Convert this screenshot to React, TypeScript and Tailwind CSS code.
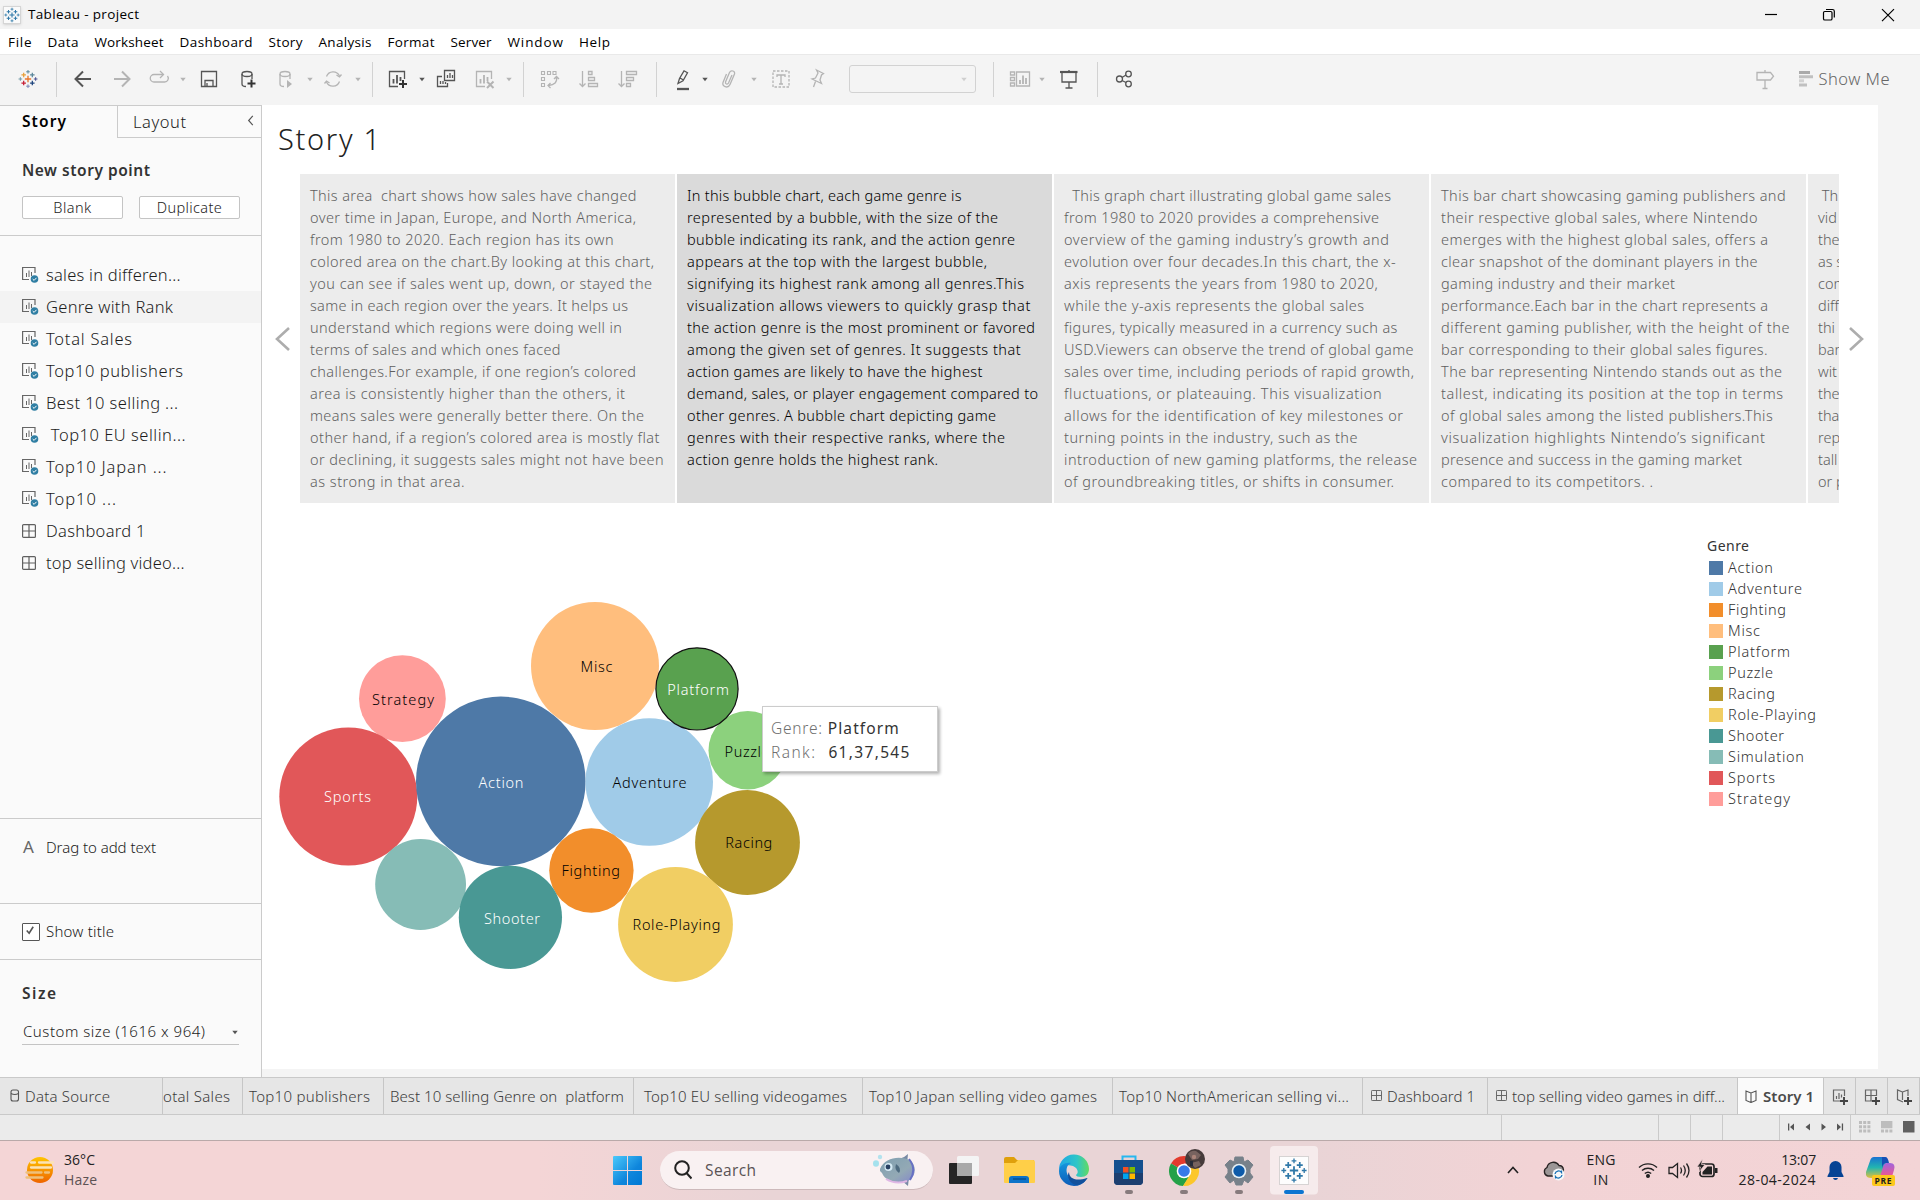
import React, { useLayoutEffect, useRef } from "react";

/** Single line of text tracked so that it fills exactly `w` pixels. */
function T({ w, children, className = "" }: { w?: number; children: string; className?: string }) {
  const ref = useRef<HTMLSpanElement>(null);
  useLayoutEffect(() => {
    const el = ref.current;
    if (!el || !w) return;
    el.style.letterSpacing = "0px";
    const natural = el.getBoundingClientRect().width;
    el.style.letterSpacing = `${(w - natural) / Math.max(1, children.length - 1)}px`;
  }, [w, children]);
  return (
    <span ref={ref} className={`inline-block shrink-0 whitespace-pre ${className}`}>
      {children}
    </span>
  );
}

type IconProps = { className?: string; children: React.ReactNode; c?: string };

function Ico({ className = "", children, c = "#b4b4b4" }: IconProps) {
  return (
    <svg viewBox="0 0 24 24" className={`h-6 w-6 shrink-0 ${className}`} fill="none" stroke={c} strokeWidth="1.3">
      {children}
    </svg>
  );
}

function Caret({ className = "", c = "#b4b4b4" }: { className?: string; c?: string }) {
  return (
    <svg viewBox="0 0 8 8" className={`h-2 w-2 shrink-0 ${className}`}>
      <path d="M1.300 2.800h5.400L4 6.200z" fill={c} />
    </svg>
  );
}

function Sep({ className = "" }: { className?: string }) {
  return <div className={`h-[35px] w-px shrink-0 bg-[#d2d2d2] ${className}`} />;
}

const menus: [string, number][] = [
  ["File", 23.5], ["Data", 31], ["Worksheet", 69], ["Dashboard", 73], ["Story", 34],
  ["Analysis", 53], ["Format", 47], ["Server", 41], ["Window", 55.5], ["Help", 31],
];

const D = "#555";

function TableauMark({ mono = false }: { mono?: boolean }) {
  const k = mono ? ["#2f78a8", "#2f78a8", "#2f78a8", "#2f78a8", "#2f78a8"] : ["#e8762c", "#c72037", "#1f457e", "#5b879b", "#59879b"];
  return (
    <g fill="none" strokeWidth="1.4">
      <path d="M10 6.500v7M6.500 10h7" stroke={k[0]} strokeWidth="1.500" />
      <path d="M5.200 3v5M2.700 5.500h5" stroke={mono ? k[0] : "#e8a03a"} />
      <path d="M14.800 3v5M12.300 5.500h5" stroke={k[3]} />
      <path d="M5.200 12v5M2.700 14.500h5" stroke={k[1]} />
      <path d="M14.800 12v5M12.300 14.500h5" stroke={k[2]} />
      <path d="M10 0v4M8 2h4" stroke={k[4]} strokeWidth="1.100" />
      <path d="M10 16v4M8 18h4" stroke={mono ? k[0] : "#7a84b5"} strokeWidth="1.100" />
      <path d="M1.500 8v4M-.500 10h4" stroke={mono ? k[0] : "#7199a6"} strokeWidth="1.100" />
      <path d="M18.500 8v4M16.500 10h4" stroke={mono ? k[0] : "#4a4f90"} strokeWidth="1.100" />
    </g>
  );
}

function TitleBar() {
  return (
    <div className="flex h-[29px] shrink-0 items-center bg-[#f3f3f3] pl-[3px] font-['Open_Sans','Noto_Sans',sans-serif] text-[13.5px] text-black">
      <svg viewBox="-1 -1 22 22" className="h-[18px] w-[18px] border border-[#d5d5d5] bg-[#fafafa] shadow-sm"><TableauMark mono /></svg>
      <T w={111} className="ml-[7px]">Tableau - project</T>
      <svg viewBox="0 0 140 16" className="mr-[25px] ml-auto h-4 w-[140px]" fill="none" stroke="#000" strokeWidth="1.2">
        <path d="M10 7.5h12" />
        <rect x="68.5" y="4.5" width="8.5" height="8.5" rx="1.3" />
        <path d="M71 2.5h6.5a1.8 1.8 0 0 1 1.8 1.8v6.2" />
        <path d="M127 2.2l12 12M139 2.2l-12 12" />
      </svg>
    </div>
  );
}

function Toolbar() {
  return (
    <div className="flex h-[51px] shrink-0 items-center border-t border-[#e9e9e9] bg-[#f4f4f4] pr-[30px] pb-[2px] pl-4">
      <svg viewBox="-2 -2 24 24" className="h-6 w-6 shrink-0 scale-90"><TableauMark /></svg>
      <Sep className="ml-4" />
      <Ico className="ml-[14px]" c={D}><path d="M20 12H5M12 4.500L4.500 12l7.500 7.500" strokeWidth="2" /></Ico>
      <Ico className="ml-[15px]"><path d="M4 12h15M12 4.500l7.500 7.500-7.500 7.500" strokeWidth="2" /></Ico>
      <Ico className="ml-[13px]"><path d="M16 7.500H7A3.700 3.700 0 0 0 7 15h10.500a3.700 3.700 0 0 0 3-6" /><path d="M13 4l3.500 3.500L13 11" /></Ico>
      <Caret className="ml-2" />
      <Ico className="ml-[10px]" c={D}><path d="M4.500 4.500h15v15h-15z" /><path d="M8 19v-5.500h8V19M10 19v-3" /></Ico>
      <Ico className="ml-[14px]" c={D}><path d="M7 7v10c0 1.500 1.500 2.500 4 2.500M17 7v5" /><ellipse cx="12" cy="7" rx="5" ry="2.500" /><path d="M16.500 12.500v8M12.500 16.500h8" stroke="#333" strokeWidth="2" /></Ico>
      <Ico className="ml-[14px]"><path d="M7 7v10c0 1.500 1.500 2.500 4 2.500M17 7v5" /><ellipse cx="12" cy="7" rx="5" ry="2.500" /><path d="M14 13l5 4-5 4z" fill="#b4b4b4" stroke="none" /></Ico>
      <Caret className="ml-[9px]" />
      <Ico className="ml-[7px]"><path d="M5.500 9.500A7 7 0 0 1 18.500 9M18.500 14.500A7 7 0 0 1 5.500 15" /><path d="M3.500 16.500l2-2.500 3 2M20.500 7.500l-2 2.500-3-2" /></Ico>
      <Caret className="ml-[9px]" />
      <Sep className="ml-[10px]" />
      <Ico className="ml-3" c={D}><path d="M19.500 12V4.500h-15v15H13" /><path d="M8.500 12v4.500M12 8v8.500M15.500 10v4" strokeWidth="1.800" /><path d="M18 13v8M14 17h8" stroke="#333" strokeWidth="2" /></Ico>
      <Caret className="ml-[9px]" c={D} />
      <Ico className="ml-2" c={D}><path d="M10.500 3.500h10v10h-10z" /><path d="M8 9.500H3.500v10h10V16" /><path d="M13.500 8v3M16 6v5M18.500 8v3M6.500 14v3M9 14v3M11.500 15v2" /></Ico>
      <Ico className="ml-[14px]"><path d="M19.500 12V4.500h-15v15H13" /><path d="M8.500 12v4.500M12 8v8.500M15.500 10v4" strokeWidth="1.800" /><path d="M15 14.500l6.500 6.500M21.500 14.500L15 21" strokeWidth="2" /></Ico>
      <Caret className="ml-[9px]" />
      <Sep className="ml-[10px]" />
      <Ico className="ml-[13px]"><path d="M4.500 4.500h3v3h-3zM10.500 4.500h3v3h-3zM16 4.500h3v3h-3zM4.500 10.500h3v3h-3zM4.500 16.500h3v3h-3z" strokeWidth="1.100" /><path d="M19.500 10c1 5-2 8-8 8.500M17 12l2.500-2.500L22 12M13.500 16l-2.500 2.500 2.500 2.500" /></Ico>
      <Ico className="ml-4"><path d="M5.500 4v15M2.500 16.500l3 3 3-3" /><path d="M11.500 4.500h3.500v3h-3.500zM11.500 10.500h6v3h-6zM11.500 16.500h9v3h-9z" /></Ico>
      <Ico className="ml-[15px]"><path d="M5.500 4v15M2.500 16.500l3 3 3-3" /><path d="M10.500 4.500h10v3h-10zM10.500 10.500h7v3h-7zM10.500 16.500h4v3h-4z" /></Ico>
      <Sep className="ml-4" />
      <Ico className="ml-[14px]" c={D}><path d="M7 16.500l1.500-5L13 3.800l3.500 2-4.500 8zM9 11l3.500 2" /><path d="M6 22h12" strokeWidth="2.300" /></Ico>
      <Caret className="ml-[6px]" c={D} />
      <Ico className="ml-2"><path d="M15 8l-3.500 8c-1 2-3.500 1-3-1l4-9.500c1.500-3 6-1.500 5 1.500l-4.500 10.500c-2 4.500-8.500 2-7-2L9.500 7" /></Ico>
      <Caret className="ml-[9px]" />
      <Ico className="ml-[11px]"><path d="M4 4h16v16H4z" strokeDasharray="2.500 1.500" /><path d="M8 10V8h8v2M12 8v9M10 17h4" /></Ico>
      <Ico className="ml-3"><path d="M11.500 3l7 3.500-2 1.500-1.500 5 1.500 3.500-9.500-4.500 3.500-1L13 6zM10.500 14.500L8.500 20" /></Ico>
      <div className="ml-5 flex h-7 w-[127px] items-center justify-end rounded-[3px] border border-[#d2d2d2] pr-[7px]"><Caret c="#cfcfcf" /></div>
      <Sep className="ml-[17px]" />
      <Ico className="ml-[14px]"><path d="M2.500 5h4v3h-4zM2.500 10.500h4v3h-4zM2.500 16h4v3h-4zM8.500 5h13v14h-13z" /><path d="M12 13v4M15 8.500V17M18 11v6" strokeWidth="1.800" /></Ico>
      <Caret className="ml-[6px]" />
      <Ico className="ml-[11px]" c={D}><path d="M3 5h17.500" strokeWidth="2.200" /><path d="M5 5.500v9.500h14V5.500M12 15v6M8.500 21h7M12 3v2" /></Ico>
      <Sep className="ml-4" />
      <Ico className="ml-[14px]" c={D}><circle cx="7.500" cy="12" r="3" /><circle cx="16.500" cy="7" r="2.800" /><circle cx="16.500" cy="17" r="2.800" /><path d="M10 10.500l4-2.500M10 13.500l4 2" /></Ico>
      <Ico className="ml-auto"><path d="M4 5.500h13.500l3 3.700-3 3.800H4zM12 3v2.500M12 13v8.500M9.500 21.500h5" /></Ico>
      <svg viewBox="0 0 14 16" className="ml-[22px] h-4 w-[14px] shrink-0">
        <path d="M0 0h11v3H0z" fill="#aaa" /><path d="M0 4.200h14v3H0zM0 12.500h8v3H0z" fill="#c0c0c0" /><path d="M0 8.300h5v3H0z" fill="#d2d2d2" />
      </svg>
      <T w={71} className="ml-[6px] text-[16.500px] font-light text-[#666]">Show Me</T>
    </div>
  );
}

function SheetIcon() {
  return (
    <svg viewBox="0 0 18 18" className="h-[18px] w-[18px] shrink-0" fill="none" stroke="#666">
      <path d="M13 7V1.500H.600v12H7" strokeWidth="1.200" />
      <path d="M4.500 7v4M7 4.500V11M9.500 6v4" />
      <circle cx="12.500" cy="13" r="3.800" fill="#2f7ea3" stroke="none" />
      <path d="M10.700 13l1.400 1.400 2.400-2.600" stroke="#fff" />
    </svg>
  );
}

function GridIcon({ className = "h-[14px] w-[14px]" }: { className?: string }) {
  return (
    <svg viewBox="0 0 14 14" className={`shrink-0 ${className}`} fill="none" stroke="#606060" strokeWidth="1.200">
      <rect x=".6" y=".6" width="12.800" height="12.800" rx="1" /><path d="M7 1v12M1 7h12" />
    </svg>
  );
}

const sheets: [string, number, boolean?][] = [
  ["sales in differen...", 134.5], ["Genre with Rank", 127], ["Total Sales", 86], ["Top10 publishers", 137],
  ["Best 10 selling ...", 132], [" Top10 EU sellin...", 139.5], ["Top10 Japan ...", 120.500], ["Top10 ...", 70],
  ["Dashboard 1", 99.5, true], ["top selling video...", 138.500, true],
];

function Sidebar() {
  return (
    <aside className="flex w-[262px] shrink-0 flex-col border-t border-r border-[#cbcbcb] bg-[#fafafa] text-[#1c1c1c]">
      <div className="flex h-8">
        <div className="flex w-[117px] items-center pl-[22px] text-black"><T w={44} className="text-[15.500px] font-semibold">Story</T></div>
        <div className="flex flex-1 items-center justify-between border-b border-l border-[#cbcbcb] pr-[7px] pl-[15px]">
          <T w={53} className="pt-px text-[16.500px] font-light">Layout</T>
          <svg viewBox="0 0 7 12" className="mb-[2px] h-[11px] w-[7px]" fill="none" stroke="#555" strokeWidth="1.300"><path d="M6 1L1.500 6 6 11" /></svg>
        </div>
      </div>
      <div className="flex h-[98px] flex-col border-b border-[#cbcbcb] pt-[20px] pl-[22px]">
        <T w={128} className="h-6 self-start text-[15.500px] leading-6 font-semibold text-[#333]">New story point</T>
        <div className="mt-[14px] flex gap-4 text-[14.500px] font-light">
          <div className="flex h-[23px] w-[101px] items-center justify-center rounded-[2px] border border-[#c4c4c4] bg-white"><T w={38}>Blank</T></div>
          <div className="flex h-[23px] w-[101px] items-center justify-center rounded-[2px] border border-[#c4c4c4] bg-white"><T w={65}>Duplicate</T></div>
        </div>
      </div>
      <div className="flex flex-1 flex-col pt-[23px] text-[16.500px] font-light">
        {sheets.map(([name, w, dash], i) => (
          <div key={i} className={`flex h-8 items-center pl-[22px] ${i === 1 ? "bg-[#f3f3f3]" : ""}`}>
            <div className="flex w-6 items-center">{dash ? <GridIcon /> : <SheetIcon />}</div>
            <T w={w}>{name}</T>
          </div>
        ))}
      </div>
      <div className="flex h-[85px] border-t border-[#cbcbcb] pt-[16px] pl-[23px] text-[15px] font-light">
        <T className="w-[23px] text-[17px] leading-6 font-normal text-[#666]">A</T><T w={110} className="h-6 leading-6">Drag to add text</T>
      </div>
      <div className="flex h-[56px] items-center border-t border-[#cbcbcb] pl-[22px] text-[15px] font-light">
        <div className="mr-[6px] flex h-[18px] w-[18px] items-center justify-center rounded-[1px] border border-[#555] bg-white">
          <svg viewBox="0 0 10 10" className="mr-[2px] mb-[2px] h-[9px] w-[9px]" fill="none" stroke="#555" strokeWidth="1.800"><path d="M.800 5l2.700 3L8 .800" /></svg>
        </div>
        <T w={68}>Show title</T>
      </div>
      <div className="flex h-[118px] flex-col border-t border-[#cbcbcb] pt-[21px] pl-[22px]">
        <T w={34} className="h-6 self-start text-[15.500px] leading-6 font-semibold text-[#333]">Size</T>
        <div className="mt-[15px] flex h-[25px] w-[217px] items-center justify-between border-b border-[#c4c4c4] text-[15px] font-light">
          <T w={182} className="ml-px pb-px">Custom size (1616 x 964)</T><Caret c={D} />
        </div>
      </div>
    </aside>
  );
}

type Line = [string, number?];
const points: Line[][] = [
  [
    ["This area  chart shows how sales have changed", 326.5], ["over time in Japan, Europe, and North America,", 326],
    ["from 1980 to 2020. Each region has its own", 303.6], ["colored area on the chart.By looking at this chart,", 344],
    ["you can see if sales went up, down, or stayed the", 342], ["same in each region over the years. It helps us", 318],
    ["understand which regions were doing well in", 312], ["terms of sales and which ones faced", 250.5],
    ["challenges.For example, if one region’s colored", 326], ["area is consistently higher than the others, it", 315],
    ["means sales were generally better there. On the", 334], ["other hand, if a region’s colored area is mostly flat", 349.5],
    ["or declining, it suggests sales might not have been", 353.6], ["as strong in that area.", 154.6],
  ],
  [
    ["In this bubble chart, each game genre is", 274.5], ["represented by a bubble, with the size of the", 311],
    ["bubble indicating its rank, and the action genre", 328], ["appears at the top with the largest bubble,", 300],
    ["signifying its highest rank among all genres.This", 337], ["visualization allows viewers to quickly grasp that", 343.4],
    ["the action genre is the most prominent or favored", 348], ["among the given set of genres. It suggests that", 333.7],
    ["action games are likely to have the highest", 295.4], ["demand, sales, or player engagement compared to", 351],
    ["other genres. A bubble chart depicting game", 309], ["genres with their respective ranks, where the", 318],
    ["action genre holds the highest rank.", 251],
  ],
  [
    ["  This graph chart illustrating global game sales", 327], ["from 1980 to 2020 provides a comprehensive", 315],
    ["overview of the gaming industry’s growth and", 325], ["evolution over four decades.In this chart, the x-", 331.7],
    ["axis represents the years from 1980 to 2020,", 313.7], ["while the y-axis represents the global sales", 300],
    ["figures, typically measured in a currency such as", 333.4], ["USD.Viewers can observe the trend of global game", 349.6],
    ["sales over time, including periods of rapid growth,", 350], ["fluctuations, or plateauing. This visualization", 317.6],
    ["allows for the identification of key milestones or", 339], ["turning points in the industry, such as the", 293.5],
    ["introduction of new gaming platforms, the release", 353], ["of groundbreaking titles, or shifts in consumer.", 330],
  ],
  [
    ["This bar chart showcasing gaming publishers and", 344.6], ["their respective global sales, where Nintendo", 316.5],
    ["emerges with the highest global sales, offers a", 327], ["clear snapshot of the dominant players in the", 316.5],
    ["gaming industry and their market", 234], ["performance.Each bar in the chart represents a", 327],
    ["different gaming publisher, with the height of the", 348.5], ["bar corresponding to their global sales figures.", 326.6],
    ["The bar representing Nintendo stands out as the", 341], ["tallest, indicating its position at the top in terms", 342],
    ["of global sales among the listed publishers.This", 331.7], ["visualization highlights Nintendo’s significant", 324],
    ["presence and success in the gaming market", 301], ["compared to its competitors. .", 212],
  ],
  [
    [" Th"], ["vid"], ["the"], ["as s"], ["com"], ["diff"], ["thi"], ["bar"], ["wit"], ["the"], ["tha"], ["rep"], ["tall"], ["or p"],
  ],
];

const genres: [string, string, number][] = [
  ["Action", "#4e79a7", 45], ["Adventure", "#a0cbe8", 74], ["Fighting", "#f28e2b", 58], ["Misc", "#ffbe7d", 32],
  ["Platform", "#59a14f", 62], ["Puzzle", "#8cd17d", 45], ["Racing", "#b6992d", 47], ["Role-Playing", "#f1ce63", 88],
  ["Shooter", "#499894", 56], ["Simulation", "#86bcb6", 76], ["Sports", "#e15759", 47], ["Strategy", "#ff9d9a", 62],
];

// name, cx, cy, r, fill, label x, label y, label width, label colour
const bubbles: [string, number, number, number, string, number, number, number, string][] = [
  ["Strategy", 402.4, 698.7, 43.4, "#ff9d9a", 372, 699.7, 62, "#000"],
  ["Sports", 348.3, 796.5, 69, "#e15759", 324, 797, 47, "#fff"],
  ["Action", 500.8, 781.4, 84.8, "#4e79a7", 478.5, 783, 45, "#fff"],
  ["Misc", 595, 666, 64, "#ffbe7d", 580.5, 667, 32, "#000"],
  ["Adventure", 649.2, 782, 63.8, "#a0cbe8", 612.4, 783, 74, "#000"],
  ["Puzzle", 747.8, 750.3, 39.3, "#8cd17d", 724.5, 752, 45, "#000"],
  ["Racing", 747.5, 842.5, 52.4, "#b6992d", 725.3, 843, 47, "#000"],
  ["Fighting", 591.4, 870.5, 42.2, "#f28e2b", 561.5, 871, 58.5, "#000"],
  ["Role-Playing", 675.5, 924.5, 57.4, "#f1ce63", 632.5, 925, 88, "#000"],
  ["", 420.6, 884.5, 45.4, "#86bcb6", 0, 0, 0, "#000"],
  ["Shooter", 510.4, 917.3, 51.6, "#499894", 484, 919, 56, "#fff"],
  ["Platform", 697, 688.9, 41.1, "#59a14f", 667.3, 689.5, 61.6, "#fff"],
];

function Arrow({ flip = false, className = "" }: { flip?: boolean; className?: string }) {
  return (
    <svg viewBox="0 0 15 24" className={`h-6 w-[15px] shrink-0 ${flip ? "-scale-x-100" : ""} ${className}`} fill="none" stroke="#adadad" strokeWidth="2.600">
      <path d="M14 1L2 12l12 11" />
    </svg>
  );
}

function StoryView() {
  return (
    <main className="flex h-[964px] w-[1616px] flex-col bg-white">
      <h1 className="flex h-[69px] items-center pl-4 text-[#222]"><T w={102} className="pb-px text-[29px] leading-[68px] font-[350]">Story 1</T></h1>
      <section className="flex h-[329px] items-center">
        <Arrow className="ml-[13px]" />
        <div className="ml-[10px] flex h-full w-[1539px] gap-[2px] overflow-hidden">
          {points.map((lines, i) => (
            <div key={i} className={`flex w-[375px] shrink-0 flex-col pt-[10px] pl-[10px] text-[14.500px] ${i === 1 ? "bg-[#dadada] font-[350] text-black" : "bg-[#ececec] font-light text-[#5f5f5f]"}`}>
              {lines.map(([s, w], j) => (
                <div key={j} className="h-[22px] leading-[22px]"><T w={w}>{s}</T></div>
              ))}
            </div>
          ))}
        </div>
        <Arrow flip className="ml-[10px]" />
      </section>
      <section className="flex min-h-0 flex-1">
        <div className="relative w-[1445px] shrink-0">
          <svg viewBox="262 503 1445 566" className="h-[566px] w-[1445px] font-[350]">
            {bubbles.map(([name, cx, cy, r, fill, x, y, w, color], i) => (
              <g key={i}>
                <circle cx={cx} cy={cy} r={r} fill={fill} stroke={name === "Platform" ? "#111" : "none"} strokeWidth="1.200" />
                {name && <text x={x} y={y + 5} textLength={w} fill={color} fontSize="14.500">{name}</text>}
              </g>
            ))}
          </svg>
          <div className="absolute top-[203px] left-[500px] h-[66px] w-[176px] border border-[#ccc] bg-white pt-[9.500px] pl-2 shadow-[2px_2px_3px_rgba(0,0,0,0.3)]">
            <div className="flex h-6 items-center text-[15.500px]"><T w={51} className="font-light text-[#707070]">Genre:</T><T w={71} className="ml-[5px] text-[#333]">Platform</T></div>
            <div className="flex h-6 items-center text-[15.500px]"><T w={44} className="font-light text-[#707070]">Rank:</T><T w={81} className="ml-[12px] text-[#333]">61,37,545</T></div>
          </div>
        </div>
        <div className="flex flex-col pt-[31px]">
          <T w={42} className="h-[23px] self-start text-[14px] leading-[23px] text-[#333]">Genre</T>
          {genres.map(([g, c, w]) => (
            <div key={g} className="flex h-[21px] items-center pl-[2px] text-[14.500px] font-light text-[#333]">
              <svg viewBox="0 0 14 14" className="mr-[5px] h-[14px] w-[14px]"><rect width="14" height="14" fill={c} /></svg>
              <T w={w}>{g}</T>
            </div>
          ))}
        </div>
      </section>
    </main>
  );
}

function BookIcon({ className = "" }: { className?: string }) {
  return (
    <svg viewBox="0 0 12 13" className={`h-[13px] w-3 shrink-0 ${className}`} fill="none" stroke="#555" strokeWidth="1.100">
      <path d="M6 3L1 1v9.500l5 2 5-2V1zM6 3v9" />
    </svg>
  );
}

function NewTab({ kind }: { kind: "sheet" | "grid" | "book" }) {
  return (
    <svg viewBox="0 0 18 18" className="h-[18px] w-[18px]" fill="none" stroke="#666" strokeWidth="1.200">
      {kind === "sheet" && <path d="M13.500 8V2h-11v11H9M5.500 8v3M8 5v6M10.500 6.500v3" />}
      {kind === "grid" && <path d="M13.500 8V2h-11v11H9M8 2v11M2.500 7.500h11" />}
      {kind === "book" && <path d="M7.500 4L2.500 2v9.500L8 14M7.500 4l5.500-2v6M7.500 4v8" />}
      <path d="M13 9v8M9 13h8" stroke="#444" strokeWidth="1.900" />
    </svg>
  );
}

function SheetTabs() {
  const tab = "flex shrink-0 items-center border-r border-[#c6c6c6] pt-px";
  return (
    <div className="flex h-[38px] shrink-0 border-y border-[#c9c9c9] bg-[#e6e6e6] text-[15px] font-light text-[#3c3c3c]">
      <div className={`${tab} w-[163px] pl-[10px]`}>
        <svg viewBox="0 0 10 13" className="mr-[5px] mb-[2px] h-[13px] w-[10px]" fill="none" stroke="#555" strokeWidth="1.100"><rect x="1" y="1" width="7.500" height="11" rx="2" /><path d="M1 4.500c2 1 5.500 1 7.500 0" /></svg>
        <T w={85}>Data Source</T>
      </div>
      <div className={`${tab} w-[80px]`}><T w={67}>otal Sales</T></div>
      <div className={`${tab} w-[141px] pl-[6px]`}><T w={121}>Top10 publishers</T></div>
      <div className={`${tab} w-[250px] pl-[6px]`}><T w={234}>Best 10 selling Genre on  platform</T></div>
      <div className={`${tab} w-[229px] pl-[10px]`}><T w={203}>Top10 EU selling videogames</T></div>
      <div className={`${tab} w-[250px] pl-[6px]`}><T w={228}>Top10 Japan selling video games</T></div>
      <div className={`${tab} w-[250px] pl-[6px]`}><T w={230}>Top10 NorthAmerican selling vi...</T></div>
      <div className={`${tab} w-[125px] pl-2`}><GridIcon className="mr-[5px] mb-[2px] h-[11px] w-[11px]" /><T w={88}>Dashboard 1</T></div>
      <div className={`${tab} w-[250px] pl-2`}><GridIcon className="mr-[5px] mb-[2px] h-[11px] w-[11px]" /><T w={213}>top selling video games in diff...</T></div>
      <div className={`${tab} w-[86px] bg-[#fafafa] pl-[7px]`}><BookIcon className="mr-[6px]" /><T w={51} className="pb-px font-semibold text-[#4a4a4a]">Story 1</T></div>
      <div className={`${tab} w-8 justify-center`}><NewTab kind="sheet" /></div>
      <div className={`${tab} w-8 justify-center`}><NewTab kind="grid" /></div>
      <div className={`${tab} w-8 justify-center`}><NewTab kind="book" /></div>
    </div>
  );
}

function StatusBar() {
  return (
    <div className="flex h-[26px] shrink-0 border-b border-[#b9a9a9] bg-[#ebebeb]">
      <div className="w-[1502px] border-r border-[#cacaca]" />
      <div className="w-[157px] border-r border-[#cacaca]" />
      <div className="w-8 border-r border-[#cacaca]" />
      <div className="w-8 border-r border-[#cacaca]" />
      <div className="w-[57px] border-r border-[#cacaca]" />
      <div className="flex w-[71px] items-center border-r border-[#cacaca] pb-[2px] pl-[8px]">
        <svg viewBox="0 0 56 8" className="h-2 w-14" fill="#555"><path d="M0 .5h1.300v7H0zM6 .5v7L2 4zM22 .5v7L17.500 4zM33.500 .5v7L38 4zM49 .5v7l4-3.500zM53.800 .5h1.300v7h-1.300z" /></svg>
      </div>
      <svg viewBox="0 0 56 12" className="mt-[6px] ml-2 h-3 w-14">
        <path d="M0 0h3v3H0zM4.200 0h3v3h-3zM8.400 0h3v3h-3zM0 4.300h3v3H0zM4.200 4.300h3v3h-3zM8.400 4.300h3v3h-3zM0 8.600h3v3H0zM4.200 8.600h3v3h-3zM8.400 8.600h3v3h-3zM22 0h11.400v7.300H22zM22 8.600h3v3h-3zM26.200 8.600h3v3h-3zM30.400 8.600h3v3h-3z" fill="#bdbdbd" />
        <path d="M44 0h11.500v11.500H44z" fill="#606060" />
      </svg>
    </div>
  );
}

function Taskbar() {
  return (
    <div className="flex h-[59px] shrink-0 items-start bg-[linear-gradient(90deg,#f4d5d6_0%,#f4d5d6_28%,#e9d4d6_40%,#e9d4d6_68%,#f2d3d5_80%,#f3d4d6_100%)] font-['Open_Sans','Noto_Sans',sans-serif] text-[14px] text-[#222]">
      <div className="flex w-[613px] shrink-0 items-center pt-[8px] pl-[25px]">
        <svg viewBox="0 0 30 28" className="h-7 w-[30px]">
          <defs><linearGradient id="sun" x1="0" y1="0" x2="0" y2="1"><stop offset="0" stopColor="#ffc400" /><stop offset="1" stopColor="#ee6400" /></linearGradient></defs>
          <circle cx="15" cy="14" r="13" fill="url(#sun)" />
          <g strokeLinecap="round" strokeWidth="2.300"><path d="M6 6.500h4M14 6.500h14M6 11.500h20" stroke="#fbe3b5" /><path d="M1.500 16.500h15M20 16.500h4M1.500 21.500h16" stroke="#eec07b" /></g>
        </svg>
        <div className="ml-[9px] flex flex-col pt-px">
          <T w={31} className="h-5 self-start leading-5">36°C</T>
          <T w={33} className="h-5 self-start leading-5 text-[#5d5254]">Haze</T>
        </div>
      </div>
      <svg viewBox="0 0 29 59" className="h-[59px] w-[29px] shrink-0">
        <defs><linearGradient id="win" x1="0" y1="0" x2="1" y2="1"><stop offset="0" stopColor="#4cc9fb" /><stop offset=".6" stopColor="#0f86dc" /><stop offset="1" stopColor="#0078d4" /></linearGradient></defs>
        <path d="M1 15h13v14H0V16a1 1 0 0 1 1-1zM15 15h13a1 1 0 0 1 1 1v13H15zM0 30h14v14H1a1 1 0 0 1-1-1zM15 30h14v13a1 1 0 0 1-1 1H15z" fill="url(#win)" />
      </svg>
      <div className="mt-[10px] ml-[18px] flex h-[39px] w-[273px] shrink-0 items-center rounded-full border-b border-[#cdb9bb] bg-[#f9f1f2] pr-4 pl-[14px]">
        <svg viewBox="0 0 18 20" className="h-5 w-[18px]" fill="none" stroke="#222" strokeWidth="2"><circle cx="8" cy="8" r="6.800" /><path d="M12.500 13l5 5.500" /></svg>
        <T w={51} className="mt-[2px] ml-[13px] text-[15.500px] text-[#5a5355]">Search</T>
        <svg viewBox="0 0 44 32" className="ml-auto h-8 w-11">
          <defs><linearGradient id="fish" x1="0" y1="0" x2="1" y2="1"><stop offset="0" stopColor="#7f9fb0" /><stop offset=".6" stopColor="#93a9b5" /><stop offset="1" stopColor="#8487cb" /></linearGradient></defs>
          <path d="M26 5Q31 4 35 0L34 10zM28 26l7 6 1-9z" fill="#788aa5" />
          <path d="M7 15C12 3 28 1 38 7c5 5 5 13 0 18-9 7-25 4-29-6l-2-2z" fill="url(#fish)" />
          <path d="M36 5q8 10 1 21" fill="none" stroke="#6770c4" strokeWidth="2" />
          <path d="M13 25q10 6 21 2" fill="none" stroke="#dfb7e5" strokeWidth="2" />
          <circle cx="15.500" cy="13" r="4" fill="#d4e9f3" /><circle cx="15" cy="13" r="2.400" fill="#273f61" />
          <path d="M23 10q6 4 3 9-5-3-3-9z" fill="#4e6b80" />
          <ellipse cx="3" cy="9.500" rx="3" ry="3.300" fill="#a5e1ed" /><circle cx="7" cy="3" r="2.200" fill="#b4e3ee" />
        </svg>
      </div>
      <svg viewBox="0 0 30 59" className="ml-4 h-[59px] w-[30px] shrink-0">
        <rect x="0" y="22" width="23" height="21" rx="1" fill="#252525" /><rect x="8" y="15" width="22" height="20" rx="1.500" fill="#f4f4f4" /><path d="M8 22h15v13H8z" fill="#a9a9a9" />
      </svg>
      <svg viewBox="0 0 31 59" className="ml-[25px] h-[59px] w-[31px] shrink-0">
        <path d="M0 18q0-2 2-2h8l3 3h17v6H0z" fill="#dfa00c" /><path d="M0 22h11l3-3h15q2 0 2 2v20q0 1-1 1H1q-1 0-1-1z" fill="#ffcf48" />
        <path d="M5 42v-4q0-3 3-3h14q3 0 3 3v4z" fill="#0c73c9" /><path d="M9 38h13" stroke="#064f91" strokeWidth="1.500" />
      </svg>
      <svg viewBox="0 0 30 59" className="ml-6 h-[59px] w-[30px] shrink-0">
        <defs>
          <linearGradient id="e1" x1="0" y1="0" x2="1" y2="0"><stop offset="0" stopColor="#1ea6e6" /><stop offset=".6" stopColor="#2fc6c7" /><stop offset="1" stopColor="#62da62" /></linearGradient>
          <linearGradient id="e2" x1="0" y1="0" x2="0" y2="1"><stop offset="0" stopColor="#1596dd" /><stop offset="1" stopColor="#0c5cb8" /></linearGradient>
        </defs>
        <path d="M0 29a15 15 0 0 1 30-1c0 5-3 8-8 8-3 0-5-1-5-2 3-2 2-7-3-9-6-2-13 0-14 4z" fill="url(#e1)" />
        <path d="M0 30c0-6 7-9 12-8-5 2-6 9-2 14 4 5 11 6 17 3-3 4-7 6-12 6A15 15 0 0 1 0 30z" fill="url(#e2)" />
        <path d="M10 31c0 6 6 10 18 6q1 0 0 1c-3 4-7 6-11 6-6-1-10-9-7-13z" fill="#11509c" />
      </svg>
      <svg viewBox="0 0 30 59" className="ml-[25px] h-[59px] w-[30px] shrink-0">
        <path d="M8.500 21v-5.500h13V21" fill="none" stroke="#27b7ef" strokeWidth="2" /><path d="M0 19h29v21q0 4-4 4H4q-4 0-4-4z" fill="#14508f" /><path d="M0 32h29v8q0 4-4 4H4q-4 0-4-4z" fill="#1c3f70" />
        <path d="M9 26h5.500v5.500H9z" fill="#f25022" /><path d="M15.500 26H21v5.500h-5.500z" fill="#7fba00" /><path d="M9 32.500h5.500V38H9z" fill="#00a4ef" /><path d="M15.500 32.500H21V38h-5.500z" fill="#ffb900" />
        <rect x="11" y="49" width="8" height="4" rx="2" fill="#877b7d" />
      </svg>
      <svg viewBox="0 0 36 59" className="ml-[25px] h-[59px] w-9 shrink-0">
        <path d="M15 30L2 22.500A15 15 0 0 1 28 22.500H15z" fill="#e33b2e" /><path d="M2 22.500A15 15 0 0 0 14 45l7.500-11L15 30z" fill="#24a148" /><path d="M28 22.500A15 15 0 0 1 14 45l8-13-1-9.500z" fill="#fcc72b" />
        <circle cx="15" cy="30" r="7.300" fill="#fff" /><circle cx="15" cy="30" r="5.800" fill="#3679e8" />
        <circle cx="26" cy="18" r="10" fill="#463b3b" /><path d="M19 13q3-4 8-3l5 4-3 4-6 1zM22 22l8-2 2 4-6 3z" fill="#77635f" /><circle cx="25" cy="16" r="2.200" fill="#aa8479" /><path d="M21 20h3v5h-3z" fill="#262c39" />
        <rect x="11" y="49" width="8" height="4" rx="2" fill="#877b7d" />
      </svg>
      <svg viewBox="0 0 30 59" className="ml-[19px] h-[59px] w-[30px] shrink-0">
        <path d="M11 16h8l1 5 4-2 5 5-3 4v4l3 4-5 6-4-3-2 5h-6l-2-5-4 3-5-6 3-4v-4l-3-4 5-5 4 2z" fill="#77818a" stroke="#77818a" strokeLinejoin="round" />
        <circle cx="15" cy="30" r="7.300" fill="#e7f1f5" /><circle cx="15" cy="30" r="5.700" fill="#0d5ba9" /><rect x="11" y="49" width="8" height="4" rx="2" fill="#877b7d" />
      </svg>
      <svg viewBox="0 0 48 59" className="ml-4 h-[59px] w-12 shrink-0">
        <rect x="0" y="5" width="48" height="48.500" rx="4" fill="#f6ebec" /><rect x="9.500" y="15.500" width="29" height="28" fill="#fdfdfd" stroke="#d6d3d3" />
        <g transform="translate(12 17.500) scale(1.200)"><TableauMark mono /></g><rect x="14" y="49" width="20" height="4" rx="2" fill="#0b75d1" />
      </svg>
      <svg viewBox="0 0 12 59" className="ml-[189px] h-[59px] w-3 shrink-0" fill="none" stroke="#222" strokeWidth="1.600"><path d="M1 32l5-5.500 5 5.500" /></svg>
      <svg viewBox="0 0 22 59" className="ml-6 h-[59px] w-[22px] shrink-0">
        <path d="M5 35a4.500 4.500 0 0 1-1-8.500 6.500 6.500 0 0 1 12-2q4 0 4.500 4.500L17 35z" fill="#9b9696" stroke="#282323" strokeWidth="1.300" />
        <circle cx="15.500" cy="33.500" r="6" fill="#f8f8f8" /><path d="M12 33a3.600 3.600 0 0 1 6.500-1.500v-2M19 34a3.600 3.600 0 0 1-6.500 1.500v2" fill="none" stroke="#1770b5" strokeWidth="1.300" />
      </svg>
      <div className="mt-[9px] ml-5 flex w-8 flex-col items-center leading-5"><T w={29} className="h-5">ENG</T><T w={15} className="h-5">IN</T></div>
      <svg viewBox="0 0 20 59" className="ml-[21px] h-[59px] w-5 shrink-0" fill="none" stroke="#222" strokeWidth="1.400">
        <path d="M1 26.500a13 13 0 0 1 18 0M4 29.500a9 9 0 0 1 12 0M6.800 32.500a5 5 0 0 1 6.400 0" /><circle cx="10" cy="35" r="1.300" fill="#222" />
      </svg>
      <svg viewBox="0 0 22 59" className="ml-[10px] h-[59px] w-[22px] shrink-0" fill="none" stroke="#222" strokeWidth="1.300">
        <path d="M1 26.500h3.500l5-4v14l-5-4H1zM12.500 26.500q2 3 0 6M15.500 24.500q3.500 5 0 10M18.500 22.500q5 7 0 14" />
      </svg>
      <svg viewBox="0 0 21 59" className="ml-[7px] h-[59px] w-[21px] shrink-0">
        <rect x="3" y="23" width="14" height="12.500" rx="2.500" fill="none" stroke="#222" strokeWidth="1.700" /><path d="M5.500 31l5-5.500H15v8H5.500zM18 27h2.500v5H18z" fill="#222" /><path d="M5.500 18L0 26h3.500l-1.500 5 6-7.500H4.500z" fill="#222" stroke="#f2d3d5" strokeWidth=".7" />
      </svg>
      <div className="mt-[9px] ml-[18px] flex w-20 flex-col items-end leading-5"><T w={35} className="h-5">13:07</T><T w={77} className="h-5">28-04-2024</T></div>
      <svg viewBox="0 0 17 59" className="ml-[11px] h-[59px] w-[17px] shrink-0"><path d="M8.500 20a6 6 0 0 1 6 6v5l2 4v1H.5v-1l2-4v-5a6 6 0 0 1 6-6zM6 37h5q-.5 2-2.500 2T6 37z" fill="#064394" /></svg>
      <svg viewBox="0 0 30 59" className="ml-[22px] h-[59px] w-[30px] shrink-0">
        <defs>
          <linearGradient id="c1" x1="0" y1="0" x2="0" y2="1"><stop offset="0" stopColor="#1972d2" /><stop offset=".5" stopColor="#22b5b0" /><stop offset="1" stopColor="#dfc13c" /></linearGradient>
          <linearGradient id="c2" x1="0" y1="0" x2="0" y2="1"><stop offset="0" stopColor="#a064dd" /><stop offset=".6" stopColor="#ee5791" /><stop offset="1" stopColor="#f78c50" /></linearGradient>
        </defs>
        <path d="M8 16h11q3 0 2 3l-5 15q-1 3-4 3H5q-6 0-5-6l4-11q1-4 4-4z" fill="url(#c1)" /><path d="M21 22h3q6 0 4 7l-3 10q-2 5-6 5H8q4 0 5-5l4-13q1-4 4-4z" fill="url(#c2)" /><path d="M16 16h3q3 0 4 6h-3q-3 0-4 5z" fill="#164fb5" />
        <rect x="6" y="34" width="23" height="11" rx="2" fill="#fcc81c" />
        <text x="8.500" y="42.500" fontSize="8.500" fontWeight="700" fill="#1c1c1c" textLength="17">PRE</text>
      </svg>
    </div>
  );
}

export default function App() {
  return (
    <div className="flex h-[1200px] w-[1920px] flex-col overflow-hidden bg-[#f4f4f4] font-['Noto_Sans','Open_Sans',sans-serif]">
      <TitleBar />
      <div className="flex h-[25px] shrink-0 items-center gap-4 bg-white pt-[2px] pl-2 font-['Open_Sans','Noto_Sans',sans-serif] text-[13.500px] text-black">
        {menus.map(([m, w]) => <div key={m} className="flex" style={{ width: w }}><T w={w}>{m}</T></div>)}
      </div>
      <Toolbar />
      <div className="flex h-[972px] shrink-0">
        <Sidebar />
        <StoryView />
      </div>
      <SheetTabs />
      <StatusBar />
      <Taskbar />
    </div>
  );
}
